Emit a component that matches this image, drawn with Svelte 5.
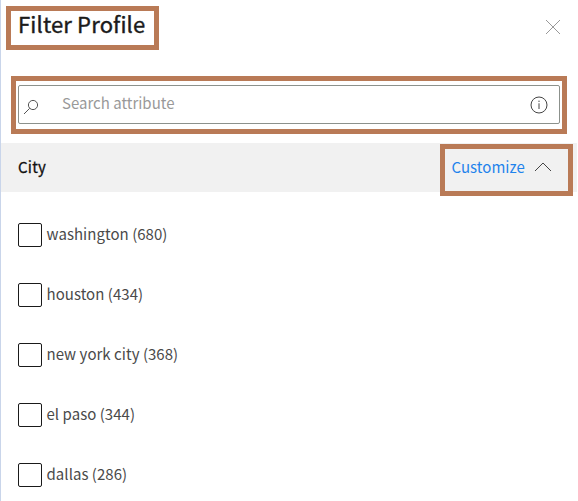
<script>
  const cities = [
    { name: 'washington', count: 680 },
    { name: 'houston', count: 434 },
    { name: 'new york city', count: 368 },
    { name: 'el paso', count: 344 },
    { name: 'dallas', count: 286 }
  ];
</script>

<main class="panel">
  <header>
    <div class="mark title-mark"><h1>Filter Profile</h1></div>
    <button class="close" aria-label="Close">
      <svg width="16" height="16" viewBox="0 0 16 16"><path d="M1 1L15 15M15 1L1 15" /></svg>
    </button>
  </header>

  <div class="mark search-mark">
    <div class="search">
      <svg class="glass" width="16" height="16" viewBox="0 0 16 16">
        <circle cx="10" cy="6" r="4.6" /><path d="M6.7 9.3L1 15" />
      </svg>
      <input type="text" placeholder="Search attribute" />
      <svg class="info" width="18" height="18" viewBox="0 0 18 18">
        <circle cx="9" cy="9" r="8" /><path d="M9 7.3V13M9 4.6V6" />
      </svg>
    </div>
  </div>

  <section>
    <div class="band">
      <h2>City</h2>
      <div class="mark custom-mark">
        <a href="#customize">Customize</a>
        <svg width="18" height="12" viewBox="0 0 18 12"><path d="M1 10L9 2L17 10" /></svg>
      </div>
    </div>
    <ul>
      {#each cities as city}
        <li>
          <label><input type="checkbox" /><span>{city.name} ({city.count})</span></label>
        </li>
      {/each}
    </ul>
  </section>
</main>

<style>
  :global(body) { background: #fff; overflow: hidden; }
  .panel, .panel * { box-sizing: border-box; }
  .panel {
    width: 577px;
    height: 501px;
    overflow: hidden;
    border-left: 1px solid #c9d5ea;
    font: 15px/24px "Source Sans Pro", "Noto Sans CJK SC", sans-serif;
    color: #4a4a4a;
  }
  svg { display: block; fill: none; stroke: #444; stroke-width: 1; flex: none; }
  .mark { border: 5px solid #b97a56; }
  header { display: flex; justify-content: space-between; padding: 6px 16px 0 5px; height: 76px; }
  .title-mark { width: 153px; height: 44px; padding: 0 0 0 7px; }
  h1 {
    margin: 0;
    font-size: 22px;
    line-height: 24px;
    letter-spacing: 0.15px;
    font-weight: 400;
    -webkit-text-stroke: 0.4px #1b1b1b;
    color: #1b1b1b;
    white-space: nowrap;
  }
  .close { align-self: flex-start; margin-top: 13px; padding: 0; border: 0; background: none; }
  .close svg { stroke: #999; }
  .search-mark { margin-left: 10px; width: 556px; height: 58px; padding: 4px 2px; }
  .search {
    display: flex;
    align-items: center;
    width: 542px;
    height: 39px;
    border: 1px solid #8c918c;
    border-radius: 2px;
    padding: 0 11px 0 4px;
  }
  .glass { margin-top: 4px; stroke: #555; }
  .search input {
    flex: 1;
    min-width: 0;
    margin-left: 23px;
    padding: 0 0 4px;
    border: 0;
    outline: 0;
    background: none;
    font: inherit;
    line-height: 24px;
    height: 28px;
  }
  .search input::placeholder { color: #999; opacity: 1; }
  .band {
    display: flex;
    justify-content: space-between;
    height: 49px;
    margin-top: 9px;
    padding: 1px 4px 0 17px;
    background: #f1f1f1;
  }
  h2 {
    margin: 0;
    font-size: 15px;
    line-height: 46px;
    letter-spacing: 0.25px;
    font-weight: 400;
    -webkit-text-stroke: 0.3px #111;
    color: #111;
  }
  .custom-mark { display: flex; align-items: center; width: 133px; height: 52px; padding: 0 0 5px 6.5px; }
  a { color: #1f83ec; text-decoration: none; padding-bottom: 1px; letter-spacing: 0.04px; }
  .custom-mark svg { margin-left: 9.1px; margin-top: -1px; }
  ul { list-style: none; margin: 13px 0 0; padding: 0 0 0 17px; }
  li { height: 60px; display: flex; align-items: center; }
  label { display: flex; align-items: center; }
  label span { padding-bottom: 2px; letter-spacing: 0.04px; }
  label input {
    appearance: none;
    width: 24px;
    height: 24px;
    margin: 0 4.5px 0 0;
    border: 1px solid #1a1a1a;
    border-radius: 2px;
    background: #fff;
  }
</style>
